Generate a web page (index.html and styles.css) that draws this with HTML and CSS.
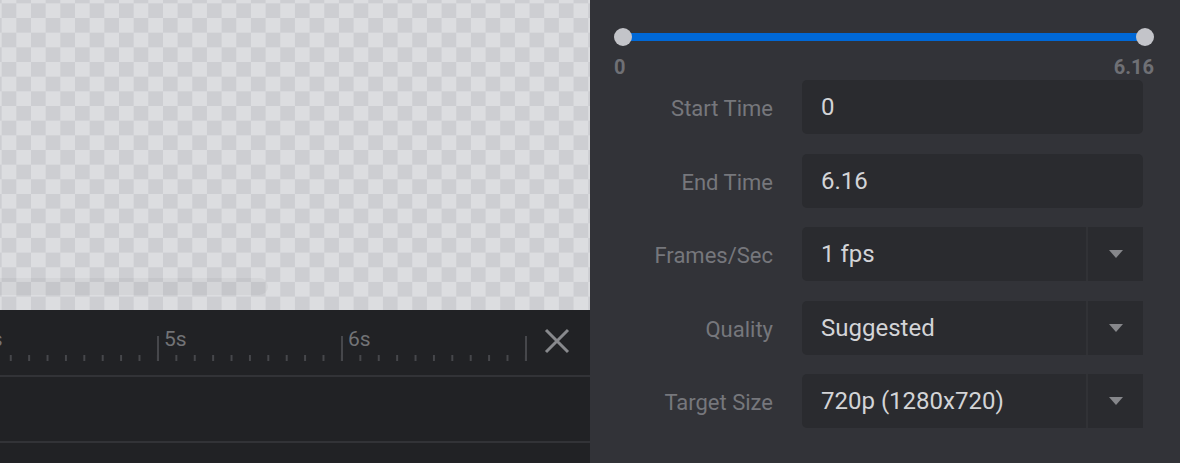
FILE: index.html
```html
<!DOCTYPE html>
<html lang="en">
<head>
<meta charset="utf-8">
<title>Export</title>
<link rel="stylesheet" href="styles.css">
</head>
<body>
<div class="app">
  <div class="left">
    <div class="preview"><div class="hscroll"></div></div>
    <div class="timeline">
      <div class="ruler-row">
        <div class="ruler">
          <div class="sec">4s</div>
          <div class="sec">5s</div>
          <div class="sec">6s</div>
          <div class="sec end"></div>
        </div>
        <button class="close" aria-label="Close">
          <svg width="26" height="26" viewBox="0 0 26 26"><path d="M2 2 L24 24 M24 2 L2 24" stroke="#88898d" stroke-width="3" fill="none"/></svg>
        </button>
      </div>
      <div class="track-row"></div>
    </div>
  </div>
  <div class="panel">
    <div class="range">
      <div class="range-track">
        <span class="knob"></span>
        <span class="fill"></span>
        <span class="knob"></span>
      </div>
      <div class="range-labels"><span>0</span><span>6.16</span></div>
    </div>
    <div class="form">
      <label class="lbl">Start Time</label>
      <div class="field"><span class="value">0</span></div>

      <label class="lbl">End Time</label>
      <div class="field"><span class="value">6.16</span></div>

      <label class="lbl">Frames/Sec</label>
      <div class="field select"><span class="value">1 fps</span><span class="caret"><svg width="14" height="8" viewBox="0 0 14 8"><path d="M0 0 H14 L7 8 Z" fill="#86878b"/></svg></span></div>

      <label class="lbl">Quality</label>
      <div class="field select"><span class="value">Suggested</span><span class="caret"><svg width="14" height="8" viewBox="0 0 14 8"><path d="M0 0 H14 L7 8 Z" fill="#86878b"/></svg></span></div>

      <label class="lbl">Target Size</label>
      <div class="field select"><span class="value">720p (1280x720)</span><span class="caret"><svg width="14" height="8" viewBox="0 0 14 8"><path d="M0 0 H14 L7 8 Z" fill="#86878b"/></svg></span></div>
    </div>
  </div>
</div>
</body>
</html>
```

FILE: styles.css
```css
* { box-sizing: border-box; }
html, body { margin: 0; padding: 0; }
body {
  font-family: Roboto, "Liberation Sans", sans-serif;
  background: #323338;
  width: 1180px;
  height: 463px;
  overflow: hidden;
}
.app {
  display: grid;
  grid-template-columns: 590px 1fr;
  height: 463px;
}
.left {
  display: flex;
  flex-direction: column;
  overflow: hidden;
}
.preview {
  position: relative;
  height: 310px;
  background-color: #dcdde0;
  background-image: conic-gradient(#dcdde0 0 25%, #cdced2 0 50%, #dcdde0 0 75%, #cdced2 0);
  background-size: 29.333px 29.333px;
  background-position: 1.67px 3.33px;
}
.hscroll {
  position: absolute;
  left: 0;
  top: 278px;
  width: 268px;
  height: 17px;
  border-radius: 0 9px 9px 0;
  background: rgba(0, 0, 0, 0.035);
}
.timeline {
  flex: 1;
  background: #212225;
  overflow: hidden;
}
.ruler-row {
  display: flex;
  height: 67px;
  border-bottom: 2px solid #323337;
}
.ruler {
  display: flex;
  align-self: flex-end;
  margin-left: -27px;
  margin-bottom: 14px;
}
.sec {
  position: relative;
  width: 184px;
  height: 32px;
  padding-left: 7px;
  font-size: 21px;
  line-height: 21px;
  color: #727376;
  background-image: linear-gradient(to right, #46474b 0 2px, transparent 2px);
  background-size: 18.4px 6px;
  background-repeat: repeat-x;
  background-position: left bottom;
}
.sec::before {
  content: "";
  position: absolute;
  left: 0;
  bottom: 0;
  width: 2px;
  height: 25px;
  background: #46474b;
}
.sec.end {
  width: 0;
  padding: 0;
  background: none;
}
.close {
  align-self: flex-start;
  margin: 18px 0 0 19px;
  padding: 0;
  border: 0;
  background: none;
  width: 26px;
  height: 26px;
  display: flex;
}
.track-row {
  height: 66px;
  border-bottom: 2px solid #323337;
}
.panel {
  padding: 28px 26px 0 24px;
  display: flex;
  flex-direction: column;
}
.range-track {
  display: flex;
  align-items: center;
  height: 18px;
}
.knob {
  position: relative;
  z-index: 1;
  width: 18px;
  height: 18px;
  border-radius: 50%;
  background: #c3c4c9;
  flex: none;
}
.fill {
  flex: 1;
  height: 8px;
  margin: 0 -9px;
  background: #0068d6;
}
.range-labels {
  display: flex;
  justify-content: space-between;
  margin-top: 9px;
  font-size: 20px;
  line-height: 24px;
  font-weight: 700;
  color: #6f7075;
}
.form {
  margin-top: 1px;
  display: grid;
  grid-template-columns: 1fr 341px;
  column-gap: 29px;
  row-gap: 19.5px;
  margin-right: 11px;
  grid-auto-rows: 54px;
}
.lbl {
  display: flex;
  align-items: center;
  justify-content: flex-end;
  padding-top: 3px;
  font-size: 22px;
  color: #76777c;
}
.field {
  display: flex;
  align-items: center;
  background: #2a2b2f;
  border-radius: 5px;
  overflow: hidden;
}
.value {
  flex: 1;
  padding-left: 19px;
  font-size: 24px;
  color: #d3d4d7;
}
.field.select { border-radius: 5px 0 0 5px; }
.caret {
  align-self: stretch;
  width: 57px;
  border-left: 2px solid #313236;
  display: flex;
  align-items: center;
  justify-content: center;
}
```
